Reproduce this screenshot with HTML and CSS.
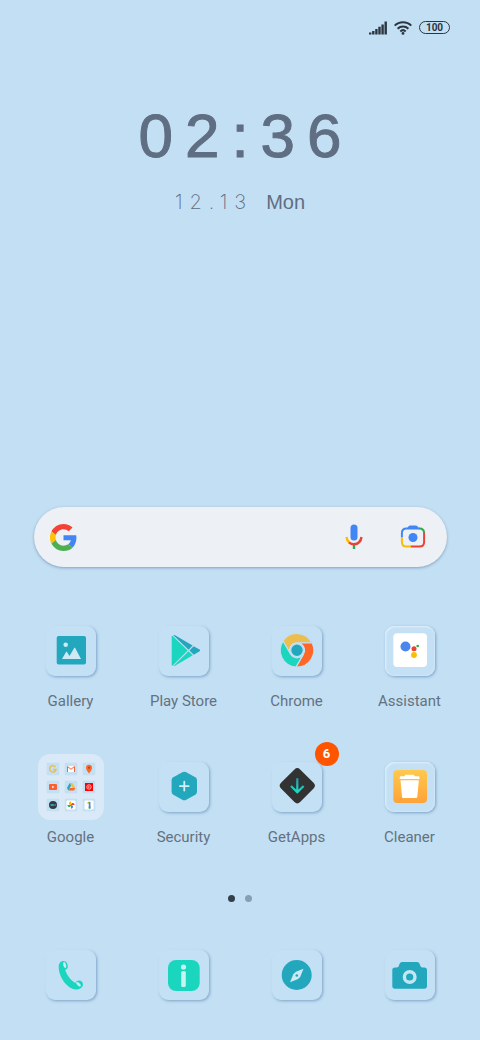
FILE: index.html
```html
<!DOCTYPE html>
<html lang="en">
<head>
    <meta charset="UTF-8">
    <meta name="viewport" content="width=device-width, initial-scale=1.0">
    <title>Home</title>
    <link rel="stylesheet" href="styles.css">
</head>
<body>
    <header class="status-bar">
        <svg class="signal" viewBox="0 0 18 14" aria-label="Signal">
            <path d="M0 13.500v-2h2.400v2zM3.100 13.500v-3.600h2.400v3.600zM6.200 13.500V7.900h2.400v5.600zM9.300 13.500V5.700h2.400v7.800zM12.400 13.500V3.500h2.400v10zM15.500 13.500V.500h2.400v13z"/>
        </svg>
        <svg class="wifi" viewBox="0 0 18 14" aria-label="Wi-Fi">
            <path d="M.700 4.600a11.700 11.700 0 0 1 16.600 0M3.600 7.700a7.700 7.700 0 0 1 10.800 0M6.300 10.400a4 4 0 0 1 5.400 0"/>
            <circle cx="9" cy="12.400" r="1.400"/>
        </svg>
        <span class="battery">100</span>
    </header>

    <section class="clock">
        <time class="time">02:36</time>
        <p class="date"><span class="day">12.13</span><span class="weekday">Mon</span></p>
    </section>

    <form class="search">
        <svg class="google-logo" viewBox="0 0 48 48">
            <path fill="#f44336" d="M24 9.5c3.54 0 6.71 1.22 9.21 3.6l6.85-6.85C35.9 2.38 30.47 0 24 0 14.62 0 6.51 5.38 2.56 13.22l7.98 6.19C12.43 13.72 17.74 9.5 24 9.5z"/>
            <path fill="#4285f4" d="M46.98 24.55c0-1.57-.15-3.09-.38-4.55H24v9.02h12.94c-.58 2.96-2.26 5.48-4.78 7.18l7.73 6c4.51-4.18 7.09-10.36 7.09-17.65z"/>
            <path fill="#ffc107" d="M10.53 28.59c-.48-1.45-.76-2.99-.76-4.59s.27-3.14.76-4.59l-7.98-6.19C.92 16.46 0 20.12 0 24c0 3.88.92 7.54 2.56 10.78l7.97-6.19z"/>
            <path fill="#4caf50" d="M24 48c6.48 0 11.93-2.13 15.89-5.81l-7.73-6c-2.15 1.45-4.92 2.3-8.16 2.3-6.26 0-11.57-4.22-13.47-9.91l-7.98 6.19C6.51 42.62 14.62 48 24 48z"/>
        </svg>
        <input type="text" aria-label="Search">
        <button type="button" aria-label="Voice search">
            <svg class="mic" viewBox="0 0 18 26">
                <rect x="5.500" y="0.500" width="7" height="16" rx="3.500" fill="#4285f4"/>
                <path d="M9 20.500v4.500" stroke="#34a853" stroke-width="2.400"/>
                <path d="M1.500 13q.4 3.400 2.600 5.400" stroke="#fbbc04" stroke-width="2.400"/>
                <path d="M4 18.300q2.200 2 5 2 6.500-.4 7.500-7.300" stroke="#ea4335" stroke-width="2.400"/>
            </svg>
        </button>
        <button type="button" aria-label="Google Lens">
            <svg class="lens" viewBox="0 0 26 24">
                <path d="M1.900 12.500V8q0-4.500 4.500-4.500H20" stroke="#4285f4"/>
                <path d="M7 3.500Q8.500.500 10 .500h6q1.500 0 3 3z" fill="#4285f4"/>
                <path d="M19.500 3.500q4.600 0 4.600 4.500" stroke="#34a853"/>
                <path d="M24.100 7.500V17q0 4.500-4.500 4.500H10.500" stroke="#ea4335"/>
                <path d="M1.900 12v5q0 4.500 4.500 4.500H11" stroke="#fbbc04"/>
                <circle cx="13" cy="12.500" r="4.500" fill="#4285f4"/>
            </svg>
        </button>
    </form>

    <main class="apps">
        <a class="app" href="#">
            <span class="tile">
                <svg viewBox="0 0 50 50">
                    <rect class="teal" x="10.700" y="10" width="29.300" height="28.500" rx="2"/>
                    <circle class="cut" cx="19.700" cy="18.700" r="2.300"/>
                    <path class="cut" d="M16 33l4-7q.5-.8 1 0l2.500 4 4.700-8q.5-.8 1 0L35 33z"/>
                </svg>
            </span>
            <span class="label">Gallery</span>
        </a>
        <a class="app" href="#">
            <span class="tile">
                <svg viewBox="0 0 50 50">
                    <path class="mint" d="M12.700 10.500q0-1.200 1-.6L28.700 24.500 13.700 39.500q-1 .6-1-.6z"/>
                    <path class="teal" d="M14.300 9.300q.8-.4 1.700 0L33.600 19.600l-4 4.200z"/>
                    <path class="teal" d="M34.600 20.200l6 3.400q1.200.8 0 1.600l-5.800 3.600-4.300-4.300z"/>
                    <path class="mint" d="M29.600 25.300l4.200 4L16 39.800q-.9.500-1.600.2z"/>
                </svg>
            </span>
            <span class="label">Play Store</span>
        </a>
        <a class="app" href="#">
            <span class="tile">
                <svg viewBox="0 0 50 50">
                    <g transform="translate(25 24.300)" stroke="#c3dff4" stroke-width="1.200">
                        <path fill="#edbd4e" d="M0-7.500H15A16.800 16.800 0 0 0-14-9.300L-6.500 3.750A7.500 7.500 0 0 1 0-7.500z"/>
                        <path fill="#ff6726" transform="rotate(120)" d="M0-7.500H15A16.800 16.800 0 0 0-14-9.300L-6.500 3.750A7.500 7.500 0 0 1 0-7.500z"/>
                        <path fill="#1ad6bf" transform="rotate(240)" d="M0-7.500H15A16.800 16.800 0 0 0-14-9.300L-6.500 3.750A7.500 7.500 0 0 1 0-7.500z"/>
                        <circle class="teal" r="6.300"/>
                    </g>
                </svg>
            </span>
            <span class="label">Chrome</span>
        </a>
        <a class="app" href="#">
            <span class="tile raised">
                <svg viewBox="0 0 50 50">
                    <rect x="8.300" y="7.300" width="33.700" height="33.700" rx="4" fill="#fff"/>
                    <circle cx="20.500" cy="20.500" r="5" fill="#4a86ee"/>
                    <circle cx="29" cy="22.700" r="2.500" fill="#ea4335"/>
                    <circle cx="32.700" cy="20" r="1.300" fill="#34a853"/>
                    <circle cx="29" cy="29" r="2.900" fill="#fbbc04"/>
                </svg>
            </span>
            <span class="label">Assistant</span>
        </a>
        <a class="app" href="#">
            <span class="folder">
                <svg viewBox="0 0 12 12"><path d="M8.500 4A3.200 3.200 0 1 0 9 6.500H6.300" fill="none" stroke="#edbd4e" stroke-width="1.500"/></svg>
                <svg viewBox="0 0 12 12"><rect x="2" y="3" width="8" height="6" fill="#fff"/><path d="M2.500 9V3.500L6 6.300l3.500-2.800V9" fill="none" stroke="#f2643d" stroke-width="1"/></svg>
                <svg viewBox="0 0 12 12"><path d="M6 10.500Q3 6.800 3 4.700a3 3 0 0 1 6 0Q9 6.800 6 10.500z" fill="#ff6726"/><circle cx="6" cy="4.700" r="1" fill="#8c4a3a"/></svg>
                <svg viewBox="0 0 12 12"><rect x="2" y="3" width="8" height="6" rx="1" fill="#fa5f2d"/><path d="M5.200 4.800v2.400L7.300 6z" fill="#fff"/></svg>
                <svg viewBox="0 0 12 12"><path d="M4.700 2h2.600l3 5H7.600z" fill="#edbd4e"/><path d="M4.700 2L2 7l1.400 2.500 2.700-5z" fill="#22a7bd"/><path d="M3.400 9.500L4.800 7h5.500L9 9.500z" fill="#ff6726"/></svg>
                <svg viewBox="0 0 12 12"><rect x="2" y="2" width="8" height="8" fill="#f00"/><circle cx="6" cy="6" r="2.200" fill="none" stroke="#fff" stroke-width=".7"/><path d="M5.400 5v2l1.500-1z" fill="#fff"/></svg>
                <svg viewBox="0 0 12 12"><circle cx="6" cy="6" r="4" fill="#333a40"/><path d="M3.500 5h3.400v2H3.500z" fill="#27a1b4"/><path d="M7 6l1.600-1v2z" fill="#3bc1b0"/></svg>
                <svg viewBox="0 0 12 12"><rect x="1.500" y="1.500" width="9" height="9" rx="1" fill="#fff"/><path d="M6 6V2.300Q3.700 2.600 3.900 4.500 4 6 6 6z" fill="#fbbc04"/><path d="M6 6h3.700Q9.400 3.700 7.500 3.900 6 4 6 6z" fill="#ea4335"/><path d="M6 6v3.700Q8.300 9.400 8.100 7.500 8 6 6 6z" fill="#4285f4"/><path d="M6 6H2.300Q2.600 8.300 4.500 8.100 6 8 6 6z" fill="#34a853"/></svg>
                <svg viewBox="0 0 12 12"><rect x="1.500" y="1.500" width="9" height="9" rx="1" fill="#fff"/><path d="M4.500 4.300l2-1.300" stroke="#fbbc04" stroke-width="1.500"/><path d="M6.600 3v6.500" stroke="#4285f4" stroke-width="1.700"/><path d="M6.600 7.500v2" stroke="#34a853" stroke-width="1.700"/></svg>
            </span>
            <span class="label">Google</span>
        </a>
        <a class="app" href="#">
            <span class="tile">
                <svg viewBox="0 0 50 50">
                    <path class="teal" d="M23.300 10.200q2-1 4 0l9 5.100q1.700 1 1.700 3v11.400q0 2-1.700 3l-9 5.100q-2 1-4 0l-9-5.100q-1.700-1-1.700-3V18.300q0-2 1.700-3z"/>
                    <path d="M25.300 19.700v8.800M20.900 24.100h8.800" stroke="#d4f0f7" stroke-width="1.800" stroke-linecap="round"/>
                </svg>
            </span>
            <span class="label">Security</span>
        </a>
        <a class="app" href="#">
            <span class="tile">
                <svg viewBox="0 0 50 50">
                    <defs>
                        <linearGradient id="arrow" x1="0" y1="16" x2="0" y2="31" gradientUnits="userSpaceOnUse">
                            <stop offset="0" stop-color="#239aad"/>
                            <stop offset="1" stop-color="#1fe0c4"/>
                        </linearGradient>
                    </defs>
                    <rect x="11.800" y="10.200" width="27" height="27" rx="4" fill="#323232" transform="rotate(45 25.300 23.700)"/>
                    <path d="M25.300 16.300v13.500M19 24l6.300 6.200L31.600 24" fill="none" stroke="url(#arrow)" stroke-width="2.200"/>
                </svg>
                <span class="badge">6</span>
            </span>
            <span class="label">GetApps</span>
        </a>
        <a class="app" href="#">
            <span class="tile raised">
                <svg viewBox="0 0 50 50">
                    <defs>
                        <linearGradient id="bin" x1="0" y1="0" x2="0" y2="1">
                            <stop offset="0" stop-color="#ffc94d"/>
                            <stop offset="1" stop-color="#ffa238"/>
                        </linearGradient>
                    </defs>
                    <rect x="8.300" y="8" width="33.700" height="33" rx="4" fill="url(#bin)"/>
                    <path fill="#fff" d="M14.700 17v-1.400q0-1.300 1.300-1.300h3.500l.8-1.600h8.600l.8 1.600h3.500q1.300 0 1.300 1.300V17zM15.500 18.300h18.300l-1.500 16.500q-.1 1.200-1.300 1.200H18.300q-1.200 0-1.300-1.200z"/>
                </svg>
            </span>
            <span class="label">Cleaner</span>
        </a>
    </main>

    <div class="pages">
        <span class="dot active"></span>
        <span class="dot"></span>
    </div>

    <nav class="dock">
        <a class="app" href="#" aria-label="Phone">
            <span class="tile">
                <svg viewBox="0 0 50 50">
                    <path class="mint" d="M12.700 17c0-4 2-6 4.800-6 3 0 4.500 3 4.300 6-.1 1.600-1.500 2.300-2.600 3 1.500 5 5.500 10 10 13 1-1.300 2-2.400 3.800-2.400 2.300 0 4 1.900 4 3.600 0 3.400-4 5.500-7.500 5.300-8-.7-16.700-12-16.800-22.500z"/>
                    <ellipse class="cut" cx="18.700" cy="15" rx="1.400" ry="3" transform="rotate(-15 18.700 15)"/>
                    <ellipse class="cut" cx="32.500" cy="34.200" rx="1.400" ry="2.900" transform="rotate(-50 32.500 34.200)"/>
                </svg>
            </span>
        </a>
        <a class="app" href="#" aria-label="Messages">
            <span class="tile">
                <svg viewBox="0 0 50 50">
                    <rect class="mint" x="9" y="10" width="31.700" height="31" rx="8"/>
                    <circle cx="24.500" cy="17" r="2.600" fill="#c6f5f1"/>
                    <rect x="22.200" y="21" width="4.600" height="16" rx="1.600" fill="#c6f5f1"/>
                </svg>
            </span>
        </a>
        <a class="app" href="#" aria-label="Browser">
            <span class="tile">
                <svg viewBox="0 0 50 50">
                    <circle class="teal" cx="24.700" cy="25" r="15"/>
                    <path class="cut" d="M31.500 18.700l-3.300 8.200-2.600 2.400L18 32.200l3.300-8 2.600-2.400z"/>
                    <circle class="teal" cx="24.800" cy="25.500" r="1.300"/>
                </svg>
            </span>
        </a>
        <a class="app" href="#" aria-label="Camera">
            <span class="tile">
                <svg viewBox="0 0 50 50">
                    <path class="teal" d="M7.300 20q0-2.600 2.600-2.600h2q1.500 0 2-1.600l.7-2q.6-1.800 2.500-1.800h15q1.900 0 2.500 1.800l.7 2q.5 1.600 2 1.600h2q2.700 0 2.700 2.600v16q0 2.700-2.700 2.700H9.900q-2.600 0-2.600-2.700z"/>
                    <circle cx="24.700" cy="27" r="5.300" fill="none" stroke="#c3e6f4" stroke-width="3.400"/>
                </svg>
            </span>
        </a>
    </nav>
</body>
</html>
```

FILE: styles.css
```css
:root {
    --background-color: #c3dff4;
    --text-color: #5f6e82;
    --label-color: #64727f;
    --teal: #22a7bd;
    --mint: #1ad6bf;
}

* {
    box-sizing: border-box;
}

body {
    font-family: Roboto, sans-serif;
    margin: 0;
    min-height: 100vh;
    background-color: var(--background-color);
    color: var(--text-color);
}

a {
    color: inherit;
    text-decoration: none;
}

/* status bar */
.status-bar {
    display: flex;
    justify-content: flex-end;
    align-items: center;
    gap: 7px;
    height: 55px;
    padding: 0 30px;
}

.signal,
.wifi {
    width: 18px;
    height: 14px;
    fill: #2b3640;
}

.wifi path {
    fill: none;
    stroke: #2b3640;
    stroke-width: 2;
}

.battery {
    width: 31px;
    height: 13px;
    border: 1px solid #2b3640;
    border-radius: 7px;
    color: #2b3640;
    font-size: 10px;
    font-weight: 700;
    line-height: 12px;
    text-align: center;
}

/* clock */
.clock {
    display: flex;
    flex-direction: column;
    align-items: center;
    padding-top: 45px;
    font-family: "Liberation Sans", Arial, sans-serif;
}

.time {
    font-size: 62px;
    line-height: 72px;
    letter-spacing: 12px;
    margin-right: -12px;
    -webkit-text-stroke: 1px var(--text-color);
}

.date {
    display: flex;
    gap: 13px;
    margin: 18px 0 0;
    font-size: 20px;
    line-height: 24px;
}

.day {
    font-family: Inter, sans-serif;
    font-weight: 200;
    letter-spacing: 7px;
}

/* search */
.search {
    display: flex;
    align-items: center;
    height: 60px;
    margin: 293px 33px 0 34px;
    padding: 0 16px;
    background: #edf1f5;
    border-radius: 30px;
    box-shadow: 0 1px 3px rgba(70, 100, 130, 0.5);
}

.search input {
    flex: 1;
    min-width: 0;
    height: 40px;
    border: none;
    outline: none;
    background: none;
    font-size: 16px;
}

.search button {
    display: flex;
    justify-content: center;
    padding: 0;
    width: 36px;
    border: none;
    background: none;
    cursor: pointer;
}

.search button + button {
    margin-left: 23px;
}

.search button path {
    fill: none;
}

.search button path[fill] {
    fill: #4285f4;
}

.google-logo {
    width: 27px;
    height: 27px;
}

.mic {
    width: 18px;
    height: 26px;
}

.lens {
    width: 26px;
    height: 24px;
    stroke-width: 2px;
}

/* app grid */
.apps,
.dock {
    display: grid;
    grid-template-columns: repeat(4, 1fr);
    padding: 0 14px;
}

.apps {
    row-gap: 51px;
    margin-top: 59px;
}

.app {
    display: flex;
    flex-direction: column;
    align-items: center;
}

.tile {
    position: relative;
    width: 50px;
    height: 50px;
    border-radius: 9px;
    background: #c4e0f5;
    box-shadow: 1px 1px 3px rgba(95, 140, 180, 0.7), -1px -1px 2px rgba(215, 235, 250, 0.6);
}

.raised {
    box-shadow: 1px 1px 3px rgba(95, 140, 180, 0.7), inset 1px 1px 2px #e2f1fc, inset -1px -1px 2px #cde5f7;
}

.tile svg {
    display: block;
    width: 50px;
    height: 50px;
}

.teal {
    fill: var(--teal);
}

.mint {
    fill: var(--mint);
}

.cut {
    fill: #cde9f6;
}

.label {
    margin-top: 15px;
    color: var(--label-color);
    font-size: 15px;
    line-height: 20px;
}

.badge {
    position: absolute;
    top: -20px;
    right: -17px;
    width: 24px;
    height: 24px;
    border-radius: 50%;
    background: #ff5500;
    color: #fff;
    font-size: 13px;
    font-weight: 700;
    line-height: 24px;
    text-align: center;
}

.folder {
    display: grid;
    grid-template-columns: repeat(3, 12px);
    gap: 6px;
    width: 66px;
    height: 66px;
    margin: -8px 0;
    padding: 9px;
    border-radius: 12px;
    background: #d9e9f7;
}

.folder svg {
    width: 12px;
    height: 12px;
    border-radius: 2px;
    background: #c4e0f2;
    box-shadow: 0 0 1px #a5c8e0;
}

/* page dots */
.pages {
    display: flex;
    justify-content: center;
    gap: 10px;
    margin-top: 48px;
}

.dot {
    width: 7px;
    height: 7px;
    border-radius: 50%;
    background: #879fb2;
}

.dot.active {
    background: #343f49;
}

.dock {
    margin-top: 48px;
    padding-bottom: 39px;
}
```
